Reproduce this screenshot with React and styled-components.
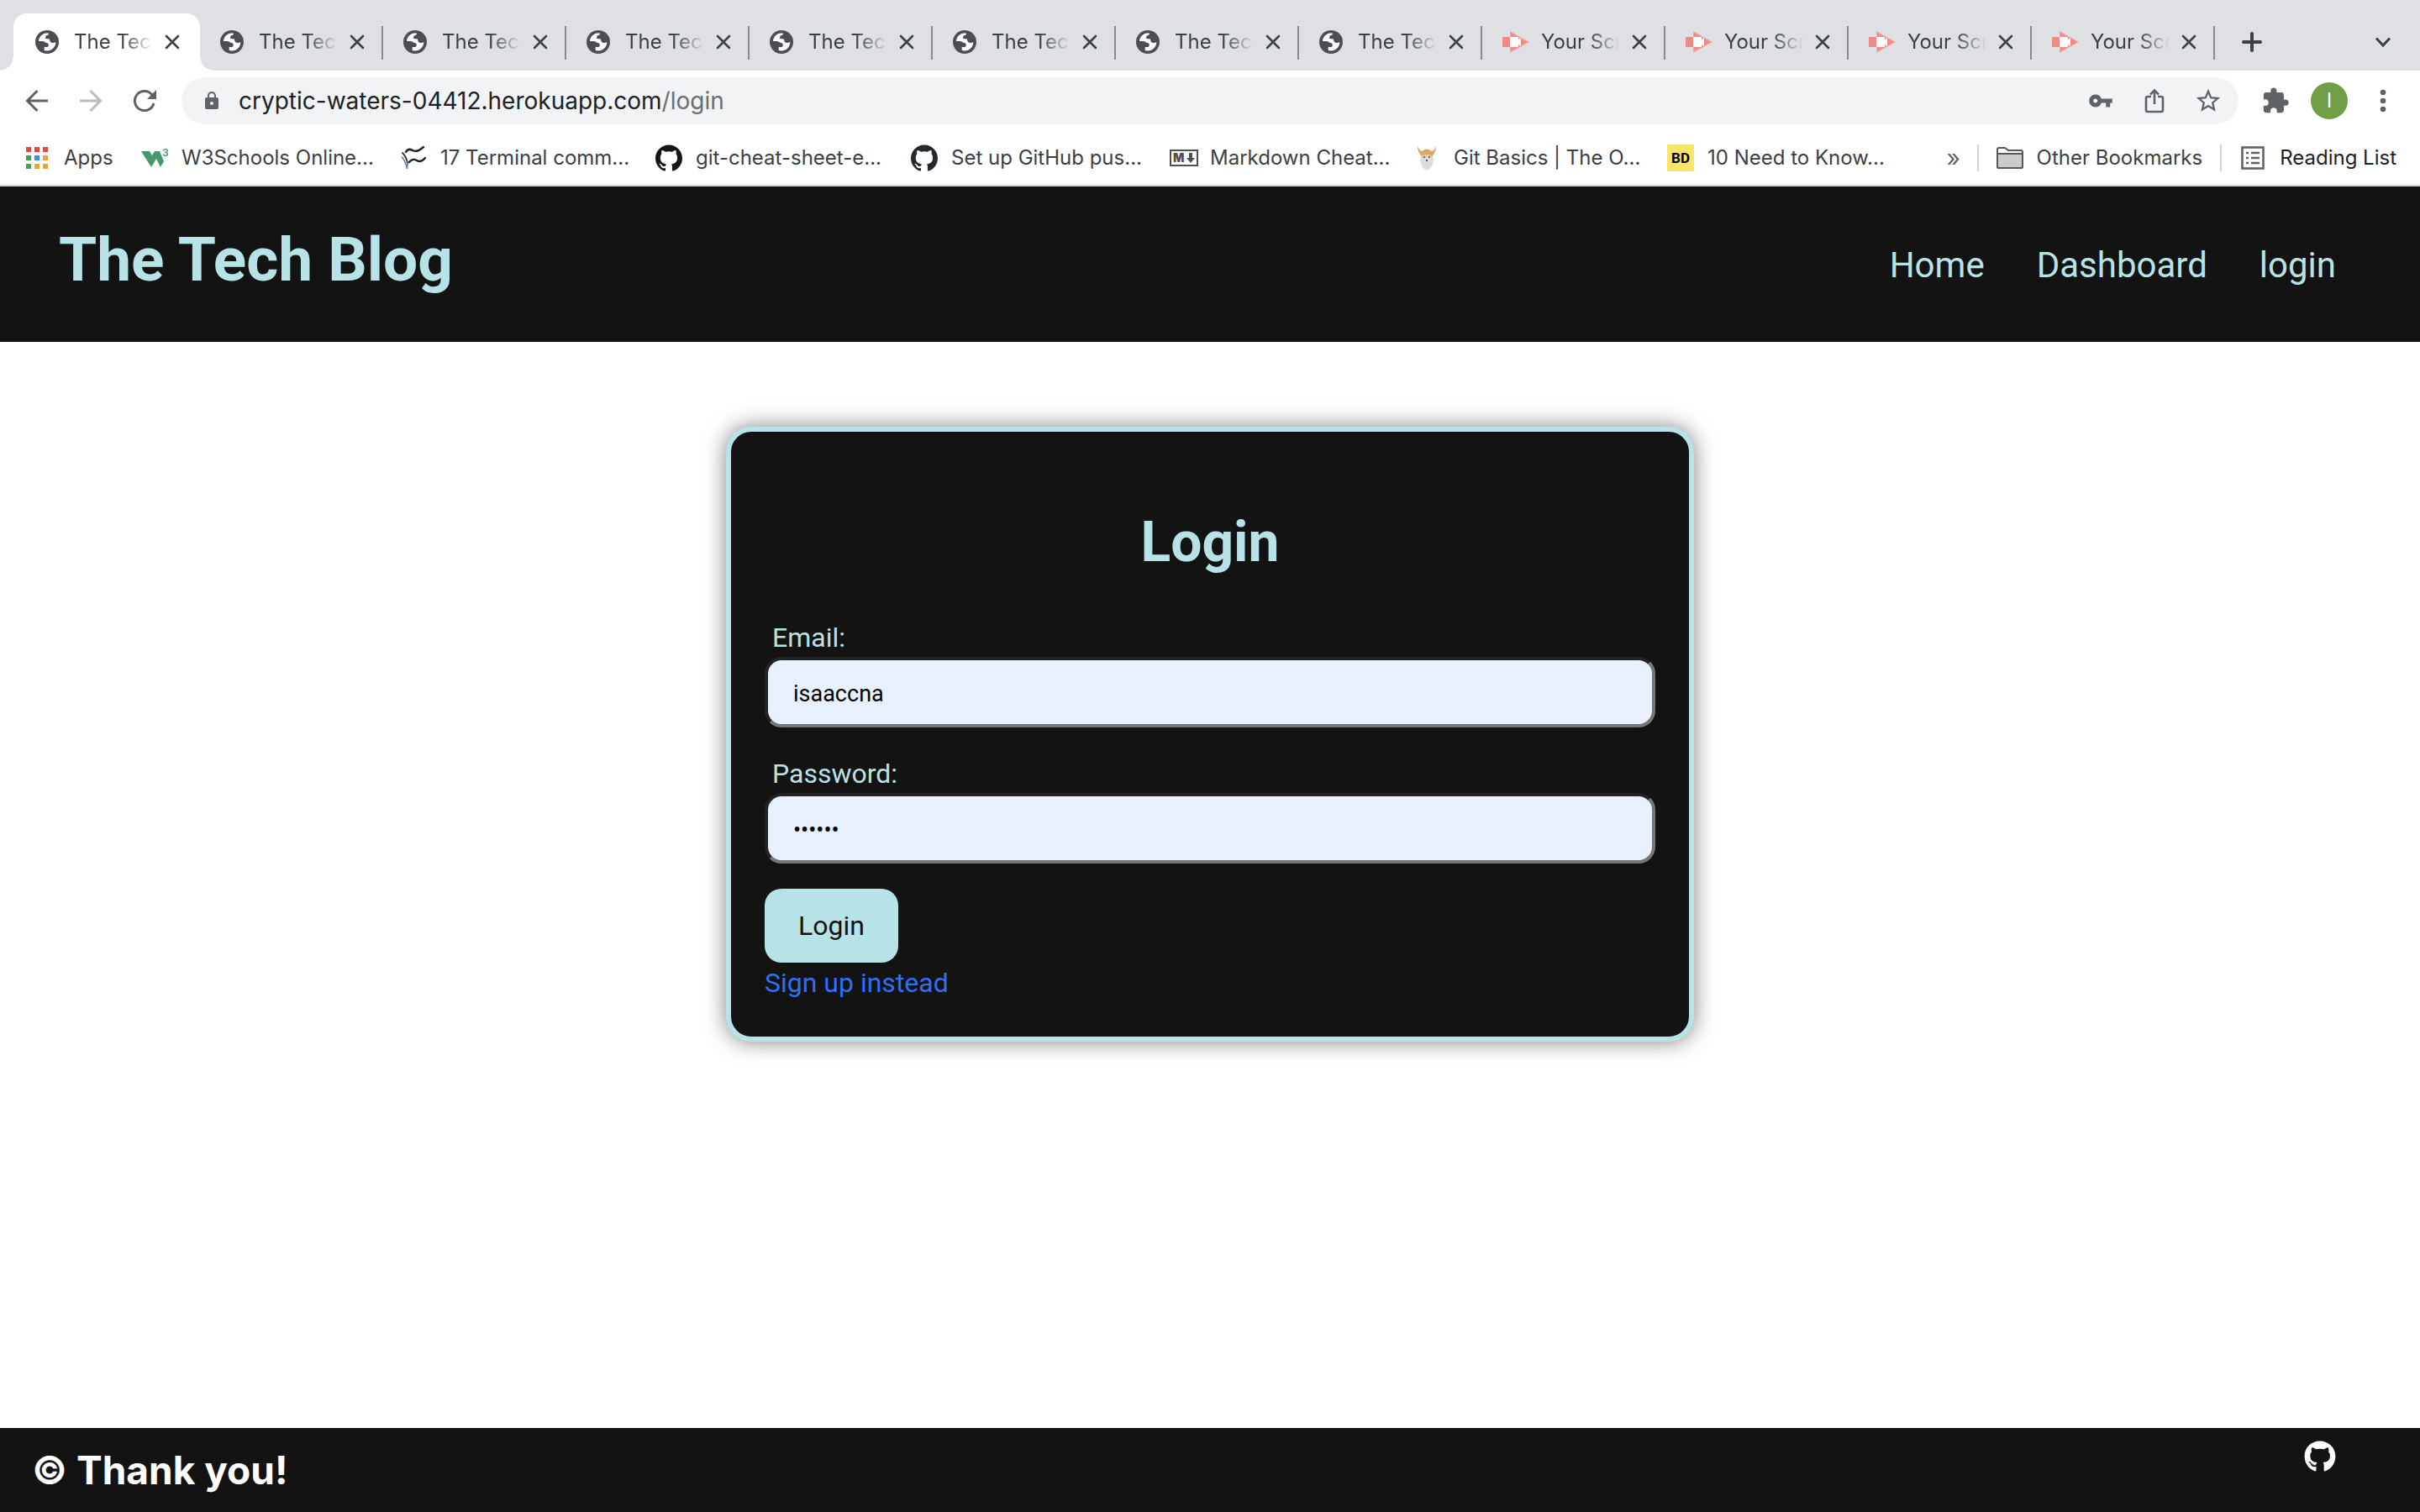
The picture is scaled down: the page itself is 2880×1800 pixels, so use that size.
import React from "react";
import styled, { createGlobalStyle } from "styled-components";
import { MdLock, MdVpnKey, MdStarBorder, MdExtension } from "react-icons/md";
import { SiGithub } from "react-icons/si";
import { FaGithub } from "react-icons/fa";

const aqua = "#b8e3e6";
const ink = "#131313";

const GlobalStyle = createGlobalStyle`
  * { box-sizing: border-box; }
  body {
    margin: 0;
    background: #fff;
    font-family: Roboto, "Liberation Sans", sans-serif;
  }
  h1, h2, p { margin: 0; }
  button { border: 0; padding: 0; background: none; font: inherit; color: inherit; cursor: pointer; }
  a { text-decoration: none; color: inherit; }
  svg { display: block; flex: none; }
`;

const Page = styled.div`
  display: flex;
  flex-direction: column;
  min-height: 100vh;
`;

const BrowserChrome = styled.div`
  font-family: Inter, "Liberation Sans", sans-serif;
`;

/* ---------- tab strip ---------- */

const TabStrip = styled.div`
  display: flex;
  align-items: flex-end;
  height: 84px;
  padding: 0 12px 0 18px;
  background: #dee0e4;
  color: #3c4043;
`;

const Tab = styled.div`
  position: relative;
  isolation: isolate;
  display: flex;
  align-items: center;
  width: ${(p) => (p.$active ? "220px" : "218px")};
  height: 68px;
  padding-left: 24px;
  ${(p) =>
    p.$active
      ? `
    &::before {
      content: "";
      position: absolute;
      z-index: -1;
      inset: 0 0 0 -2px;
      border-radius: 16px 16px 0 0;
      background: #fff;
    }
    &::after {
      content: "";
      position: absolute;
      z-index: -1;
      left: -18px;
      right: -16px;
      bottom: 0;
      height: 16px;
      background:
        radial-gradient(circle at 0 0, transparent 15px, #fff 16px) left / 16px 16px no-repeat,
        radial-gradient(circle at 100% 0, transparent 15px, #fff 16px) right / 16px 16px no-repeat;
    }`
      : `
    &::after {
      content: "";
      position: absolute;
      top: 15px;
      right: 0;
      width: 2px;
      height: 40px;
      background: #888a8e;
    }`}
`;

const TabIcon = styled.span`
  display: flex;
  align-items: center;
  width: 28px;
  height: 28px;
`;

const TabTitle = styled.button`
  width: 94px;
  margin: 0 14px 0 18px;
  overflow: hidden;
  text-align: left;
  white-space: nowrap;
  font-size: 24px;
  line-height: 32px;
  mask-image: linear-gradient(90deg, #000 60%, transparent 100%);
`;

const StripButton = styled.button`
  display: grid;
  place-items: center;
  width: 64px;
  height: 68px;
  margin-left: ${(p) => (p.$end ? "auto" : "12px")};
`;

/* ---------- toolbar ---------- */

const Toolbar = styled.div`
  display: flex;
  align-items: center;
  height: 72px;
  padding: 0 12px;
  color: #5f6368;
`;

const ToolButton = styled.button`
  display: grid;
  place-items: center;
  width: 64px;
  height: 56px;
  color: ${(p) => (p.$muted ? "#babcbe" : "#5f6368")};
`;

const Omnibox = styled.div`
  display: flex;
  flex: 1;
  align-items: center;
  height: 56px;
  margin: 0 12px;
  padding: 0 4px 0 20px;
  border-radius: 28px;
  background: #f1f3f4;
  font-size: 28px;
  line-height: 36px;
`;

const LockSlot = styled.span`
  display: grid;
  place-items: center;
  width: 32px;
  margin-right: 16px;
`;

const AddressInput = styled.input`
  field-sizing: content;
  border: 0;
  padding: 0;
  background: none;
  font: inherit;
  color: #202124;
  outline: none;
`;

const AddressPath = styled.span`
  flex: 1;
  color: #6b6e72;
`;

const Avatar = styled.span`
  display: grid;
  place-items: center;
  width: 44px;
  height: 44px;
  border-radius: 50%;
  background: #719f45;
  color: #fff;
  font-size: 24px;
  line-height: 44px;
`;

/* ---------- bookmarks ---------- */

const BookmarksBar = styled.nav`
  display: flex;
  align-items: center;
  height: 66px;
  padding: 0 28px;
  border-bottom: 2px solid #d5d7da;
  color: #3c4043;
  font-size: 24px;
  line-height: 32px;
  white-space: nowrap;
`;

const Bookmark = styled.a`
  display: flex;
  align-items: center;
  gap: 16px;
  width: ${(p) => (p.$width ? `${p.$width}px` : "auto")};
  color: ${(p) => (p.$strong ? "#202124" : "inherit")};
`;

const IconSlot = styled.span`
  display: grid;
  place-items: center;
  width: 32px;
  height: 32px;
`;

const Overflow = styled.button`
  width: 32px;
  margin: 0 12px 0 auto;
  color: #5f6368;
  font-size: 28px;
`;

const Separator = styled.span`
  width: 2px;
  height: 32px;
  margin: 0 21px;
  background: #cfd1d4;
  &:first-of-type { margin-left: 0; }
`;

/* ---------- blog page ---------- */

const Header = styled.header`
  display: flex;
  justify-content: space-between;
  align-items: flex-start;
  padding: 43px 100px 54px 70px;
  background: ${ink};
  color: ${aqua};
`;

const SiteTitle = styled.h1`
  font-size: 73px;
  line-height: 88px;
  font-weight: 700;
`;

const SiteNav = styled.nav`
  display: flex;
  gap: 62px;
  padding-top: 24px;
  font-size: 42px;
  line-height: 54px;
`;

const Main = styled.main`
  flex: 1;
  padding: 101px 0;
`;

const Card = styled.section`
  width: 40%;
  margin: 0 auto;
  padding: 93px 40px 42px;
  border: 6px solid ${aqua};
  border-radius: 30px;
  background: ${ink};
  box-shadow: 0 0 26px rgba(0, 0, 0, 0.5);
  color: ${aqua};
  font-size: 32px;
  line-height: 44px;
`;

const CardTitle = styled.h2`
  margin-bottom: 53px;
  text-align: center;
  font-size: 66px;
  line-height: 78px;
  font-weight: 700;
`;

const Form = styled.form`
  display: flex;
  flex-direction: column;
  align-items: flex-start;
`;

const Label = styled.label`
  margin-bottom: 2px;
  padding-left: 9px;
  line-height: 42px;
`;

const Field = styled.input`
  width: 100%;
  height: 84px;
  margin-bottom: ${(p) => (p.$last ? "30px" : "34px")};
  padding: 4px 30px 0;
  border: 4px solid;
  border-color: #222 #767676 #767676 #222;
  border-radius: 20px;
  background: #e8effd;
  color: #000;
  font-family: inherit;
  font-size: 27px;
  outline: none;
`;

const SubmitButton = styled.button`
  height: 88px;
  margin-bottom: 2px;
  padding: 0 40px;
  border-radius: 20px;
  background: ${aqua};
  color: ${ink};
`;

const SignUpLink = styled.a`
  display: block;
  color: #2f6ff5;
`;

const Footer = styled.footer`
  display: flex;
  justify-content: space-between;
  align-items: flex-start;
  padding: 15px 100px 15px 38px;
  background: ${ink};
  color: #fff;
`;

const Thanks = styled.h2`
  padding: 6px 0;
  font-family: Inter, "Liberation Sans", sans-serif;
  font-size: 46px;
  line-height: 58px;
  font-weight: 700;
`;

/* ---------- drawings ---------- */

const Globe = () => (
  <svg width="28" height="28" viewBox="0 0 28 28">
    <circle cx="14" cy="14" r="14" fill="#4d4e53" />
    <path
      fill="#fff"
      d="M4 13C4.300 8 8 4 13 3.500L16 3.500C16 5 15.300 6.200 12.800 6.500C11.800 7.500 12.500 9 12 10L17 10.500C17 13 18 14.600 20 15C21.500 15.300 23 15 24.300 14C24.300 20 19.500 24.500 14 24.500C12.500 24.500 11.500 24.300 10.700 24L10.700 20L14.500 20C15.800 19 16 18 15.500 16C14.800 15.300 14 15 12.500 15L11 13.700C8 12.800 6 13 4 13Z"
    />
  </svg>
);

const Recorder = () => (
  <svg width="32" height="26" viewBox="0 0 32 26">
    <path d="M9 0L32 13L9 26Z" fill="#f1a5a3" />
    <path d="M10 2L30 13L10 24Z" fill="#f08a86" />
    <rect x="0" y="7" width="12" height="12" rx="1" fill="#f08a86" />
    <path d="M9 7H19V10L22 8V18L19 16V19H9Z" fill="#fff" />
  </svg>
);

const Cross = () => (
  <svg width="18" height="18" viewBox="0 0 18 18" stroke="#3c4043" strokeWidth="2.600" strokeLinecap="round">
    <path d="M2 2L16 16M16 2L2 16" />
  </svg>
);

const Plus = () => (
  <svg width="26" height="26" viewBox="0 0 26 26" stroke="#3c4043" strokeWidth="4" strokeLinecap="round">
    <path d="M13 3V23M3 13H23" />
  </svg>
);

const Chevron = () => (
  <svg width="20" height="14" viewBox="0 0 20 14" fill="none" stroke="#3c4043" strokeWidth="3">
    <path d="M2 2.500L10 11L18 2.500" />
  </svg>
);

const Arrow = ({ flip }) => (
  <svg width="28" height="28" viewBox="0 0 28 28" fill="none" stroke="currentColor" strokeWidth="3">
    <path d={flip ? "M1 14H26M13.500 2L25.500 14L13.500 26" : "M27 14H2M14.500 2L2.500 14L14.500 26"} />
  </svg>
);

const Reload = () => (
  <svg width="28" height="28" viewBox="0 0 28 28" fill="none" stroke="currentColor" strokeWidth="3">
    <path d="M23 7A11.500 11.500 0 1 0 25 17" />
    <path d="M28 1V12H17Z" fill="currentColor" stroke="none" />
  </svg>
);

const Share = () => (
  <svg width="24" height="30" viewBox="0 0 24 30" fill="none" stroke="currentColor" strokeWidth="2.600">
    <path d="M8 10H4Q2 10 2 12V26Q2 28 4 28H20Q22 28 22 26V12Q22 10 20 10H16" />
    <path d="M12 19V3M7 7.500L12 2.500L17 7.500" />
  </svg>
);

const Dots = () => (
  <svg width="8" height="28" viewBox="0 0 8 28" fill="currentColor">
    <circle cx="4" cy="4" r="3.300" />
    <circle cx="4" cy="14" r="3.300" />
    <circle cx="4" cy="24" r="3.300" />
  </svg>
);

const appColors = ["#e2483b", "#e2483b", "#e2483b", "#4f9a5b", "#4687f0", "#e5a53a", "#4f9a5b", "#e5a53a", "#e5a53a"];

const AppsGrid = () => (
  <svg width="26" height="26" viewBox="0 0 26 26">
    {appColors.map((c, i) => (
      <rect key={i} x={(i % 3) * 10} y={Math.floor(i / 3) * 10} width="6" height="6" fill={c} />
    ))}
  </svg>
);

const W3 = () => (
  <svg width="32" height="32" viewBox="0 0 32 32" fill="#439b6d" fontFamily="Inter, sans-serif">
    <path d="M0 8H10L13 13L16 8H22L27 20L23 27L18 17L12 27Z" />
    <text x="25" y="14" fontSize="12" fontWeight="600">3</text>
  </svg>
);

const Waves = () => (
  <svg width="30" height="30" viewBox="0 0 30 30" fill="none" strokeLinecap="round">
    <path d="M2 9Q7 14 8 22" stroke="#333" strokeWidth="1.800" />
    <path d="M1.500 14Q6 20 7.500 28Q8 24 8 21" stroke="#6482b8" strokeWidth="1.600" />
    <path d="M6 8Q9 3 14 6T27 2M10 20Q14 15 19 18T29 15" stroke="#222" strokeWidth="2.400" />
  </svg>
);

const MarkdownMark = () => (
  <svg width="34" height="20" viewBox="0 0 34 20">
    <rect x="1" y="1" width="32" height="18" fill="#fff" stroke="#505050" strokeWidth="2" />
    <text x="4" y="15" fontSize="14" fontWeight="900" fontFamily="Inter, sans-serif" fill="#505050">M</text>
    <path d="M23 4H27V10H30L25 16L20 10H23Z" fill="#505050" />
  </svg>
);

const Viking = () => (
  <svg width="24" height="30" viewBox="0 0 24 30">
    <path d="M1 0Q2 5 6 7Q12 2 18 7Q22 5 23 0Q23 8 19 12V16H5V12Q1 8 1 0Z" fill="#dbaa62" />
    <path d="M5 13Q12 9 19 13V16H5Z" fill="#e9d3ae" />
    <path d="M4 16Q12 12 20 16Q20 26 12 30Q4 26 4 16Z" fill="#dcdcdc" />
    <circle cx="9" cy="14" r="1.300" fill="#777" />
    <circle cx="15" cy="14" r="1.300" fill="#777" />
    <path d="M11 17H13V19H11Z" fill="#555" />
  </svg>
);

const BuiltBadge = () => (
  <svg width="32" height="32" viewBox="0 0 32 32">
    <rect width="32" height="32" fill="#fbe568" />
    <text x="16" y="22" textAnchor="middle" fontSize="17" fontWeight="700" fontFamily="Roboto, sans-serif">BD</text>
  </svg>
);

const Folder = () => (
  <svg width="32" height="26" viewBox="0 0 32 26" stroke="#55585c" strokeWidth="2">
    <path d="M1 23V3Q1 1 3 1H10L14 4H29Q31 4 31 6V23Q31 25 29 25H3Q1 25 1 23Z" fill="#fff" />
    <path d="M1 8H31V23Q31 25 29 25H3Q1 25 1 23Z" fill="#cbcbcb" />
  </svg>
);

const ReadingList = () => (
  <svg width="28" height="28" viewBox="0 0 28 28" fill="none" stroke="#5f6368" strokeWidth="2.600">
    <rect x="1.500" y="1.500" width="25" height="25" />
    <path d="M6 8H9M12 8H22M6 14H9M12 14H22M6 20H9M12 20H22" />
  </svg>
);

/* ---------- content ---------- */

const tabs = [
  ...Array.from({ length: 8 }, () => ({ title: "The Tech Blog", Icon: Globe })),
  ...Array.from({ length: 4 }, () => ({ title: "Your Screen", Icon: Recorder })),
];

const bookmarks = [
  { label: "Apps", width: 140, icon: <AppsGrid /> },
  { label: "W3Schools Online...", width: 308, icon: <W3 /> },
  { label: "17 Terminal comm...", width: 304, icon: <Waves /> },
  { label: "git-cheat-sheet-e...", width: 304, icon: <SiGithub size={32} color="#151515" /> },
  { label: "Set up GitHub pus...", width: 308, icon: <SiGithub size={32} color="#24292f" /> },
  { label: "Markdown Cheat...", width: 290, icon: <MarkdownMark /> },
  { label: "Git Basics | The O...", width: 302, icon: <Viking /> },
  { label: "10 Need to Know...", icon: <BuiltBadge /> },
];

export default function App() {
  return (
    <Page>
      <GlobalStyle />
      <BrowserChrome>
        <TabStrip>
          {tabs.map(({ title, Icon }, i) => (
            <Tab key={i} $active={i === 0}>
              <TabIcon>
                <Icon />
              </TabIcon>
              <TabTitle>{title}</TabTitle>
              <button aria-label="Close tab">
                <Cross />
              </button>
            </Tab>
          ))}
          <StripButton aria-label="New tab">
            <Plus />
          </StripButton>
          <StripButton $end aria-label="Search tabs">
            <Chevron />
          </StripButton>
        </TabStrip>

        <Toolbar>
          <ToolButton aria-label="Back"><Arrow /></ToolButton>
          <ToolButton $muted aria-label="Forward"><Arrow flip /></ToolButton>
          <ToolButton aria-label="Reload"><Reload /></ToolButton>
          <Omnibox>
            <LockSlot><MdLock size={24} /></LockSlot>
            <AddressInput aria-label="Address" defaultValue="cryptic-waters-04412.herokuapp.com" />
            <AddressPath>/login</AddressPath>
            <ToolButton aria-label="Saved passwords"><MdVpnKey size={30} /></ToolButton>
            <ToolButton aria-label="Share"><Share /></ToolButton>
            <ToolButton aria-label="Bookmark this page"><MdStarBorder size={34} /></ToolButton>
          </Omnibox>
          <ToolButton aria-label="Extensions"><MdExtension size={34} /></ToolButton>
          <ToolButton aria-label="Profile"><Avatar>I</Avatar></ToolButton>
          <ToolButton aria-label="Menu"><Dots /></ToolButton>
        </Toolbar>

        <BookmarksBar>
          {bookmarks.map((b) => (
            <Bookmark key={b.label} href="#" $width={b.width}>
              <IconSlot>{b.icon}</IconSlot>
              {b.label}
            </Bookmark>
          ))}
          <Overflow aria-label="More bookmarks">»</Overflow>
          <Separator />
          <Bookmark href="#">
            <IconSlot><Folder /></IconSlot>
            Other Bookmarks
          </Bookmark>
          <Separator />
          <Bookmark href="#" $strong>
            <IconSlot><ReadingList /></IconSlot>
            Reading List
          </Bookmark>
        </BookmarksBar>
      </BrowserChrome>

      <Header>
        <SiteTitle>The Tech Blog</SiteTitle>
        <SiteNav>
          <a href="#">Home</a>
          <a href="#">Dashboard</a>
          <a href="#">login</a>
        </SiteNav>
      </Header>

      <Main>
        <Card>
          <CardTitle>Login</CardTitle>
          <Form onSubmit={(e) => e.preventDefault()}>
            <Label htmlFor="email">Email:</Label>
            <Field id="email" type="text" defaultValue="isaaccna" />
            <Label htmlFor="password">Password:</Label>
            <Field id="password" type="password" defaultValue="secret" $last />
            <SubmitButton type="submit">Login</SubmitButton>
          </Form>
          <SignUpLink href="#">Sign up instead</SignUpLink>
        </Card>
      </Main>

      <Footer>
        <Thanks>© Thank you!</Thanks>
        <a href="#" aria-label="GitHub">
          <FaGithub size={38} />
        </a>
      </Footer>
    </Page>
  );
}
